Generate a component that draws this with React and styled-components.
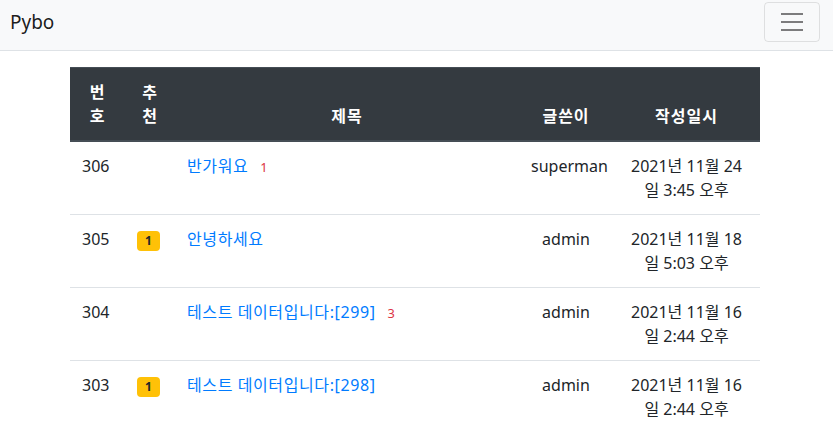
import React from 'react'
import styled, { createGlobalStyle } from 'styled-components'

const GlobalStyle = createGlobalStyle`
  body {
    margin: 0;
    font-family: "Noto Sans", "Noto Sans CJK KR", sans-serif;
    font-size: 16px;
    line-height: 1.5;
    color: #212529;
    background: #fff;
  }
`

const questions = [
    { id: 306, voter: 0, subject: '반가워요', answers: 1, author: 'superman', date: '2021년 11월 24일 3:45 오후' },
    { id: 305, voter: 1, subject: '안녕하세요', answers: 0, author: 'admin', date: '2021년 11월 18일 5:03 오후' },
    { id: 304, voter: 0, subject: '테스트 데이터입니다:[299]', answers: 3, author: 'admin', date: '2021년 11월 16일 2:44 오후' },
    { id: 303, voter: 1, subject: '테스트 데이터입니다:[298]', answers: 0, author: 'admin', date: '2021년 11월 16일 2:44 오후' },
]

function App() {
    return (
        <>
            <GlobalStyle />
            <Navbar>
                <Brand href="#">Pybo</Brand>
                <Toggler aria-label="menu">
                    <svg width="30" height="30" viewBox="0 0 30 30">
                        <path d="M4 7h22M4 15h22M4 23h22" stroke="rgba(0,0,0,0.5)" strokeWidth="2" strokeLinecap="butt" />
                    </svg>
                </Toggler>
            </Navbar>
            <Main>
                <Table>
                    <colgroup>
                        <col style={{ width: 55 }} />
                        <col style={{ width: 50 }} />
                        <col style={{ width: 344 }} />
                        <col style={{ width: 94 }} />
                        <col style={{ width: 147 }} />
                    </colgroup>
                    <thead>
                        <tr>
                            <Th narrow>번호</Th>
                            <Th narrow>추천</Th>
                            <Th>제목</Th>
                            <Th>글쓴이</Th>
                            <Th>작성일시</Th>
                        </tr>
                    </thead>
                    <tbody>
                        {questions.map((q) => (
                            <tr key={q.id}>
                                <Td>{q.id}</Td>
                                <Td>{q.voter > 0 && <Badge>{q.voter}</Badge>}</Td>
                                <Td>
                                    <SubjectLink href="#">{q.subject}</SubjectLink>
                                    {q.answers > 0 && <Count>{q.answers}</Count>}
                                </Td>
                                <Td center>{q.author}</Td>
                                <Td center>{q.date}</Td>
                            </tr>
                        ))}
                    </tbody>
                </Table>
            </Main>
        </>
    )
}

export default App

const Navbar = styled.nav`
    display: flex;
    align-items: center;
    justify-content: space-between;
    padding: 2px 13px 8px 10px;
    background: #f8f9fa;
    border-bottom: 1px solid #dee2e6;
`

const Brand = styled.a`
    font-size: 19px;
    line-height: 30px;
    padding: 5px 0;
    color: rgba(0, 0, 0, 0.9);
    text-decoration: none;
`

const Toggler = styled.button`
    display: flex;
    align-items: center;
    justify-content: center;
    width: 56px;
    height: 40px;
    padding: 4px 12px;
    background: transparent;
    border: 1px solid rgba(0, 0, 0, 0.1);
    border-radius: 4px;
    cursor: pointer;
`

const Main = styled.div`
    display: flex;
    justify-content: center;
    padding: 16px 3px 0 0;
`

const Table = styled.table`
    width: 690px;
    table-layout: fixed;
    border-collapse: collapse;
`

const Th = styled.th`
    padding: ${(p) => (p.narrow ? '12px 14px' : '12px')};
    text-align: center;
    vertical-align: bottom;
    font-weight: 700;
    letter-spacing: 1px;
    color: #fff;
    background: #343a40;
    border-top: 1px solid #454d55;
    border-bottom: 2px solid #454d55;
`

const Td = styled.td`
    padding: 12px;
    vertical-align: top;
    text-align: ${(p) => (p.center ? 'center' : 'left')};
    border-top: 1px solid #dee2e6;
`

const Badge = styled.span`
    display: inline-block;
    padding: 4px 8px;
    font-size: 12px;
    font-weight: 700;
    line-height: 1;
    color: #212529;
    background: #ffc107;
    border-radius: 4px;
    vertical-align: baseline;
`

const SubjectLink = styled.a`
    color: #007bff;
    text-decoration: none;
    letter-spacing: 0.6px;
`

const Count = styled.span`
    margin-left: 12px;
    font-size: 12.8px;
    color: #dc3545;
`
